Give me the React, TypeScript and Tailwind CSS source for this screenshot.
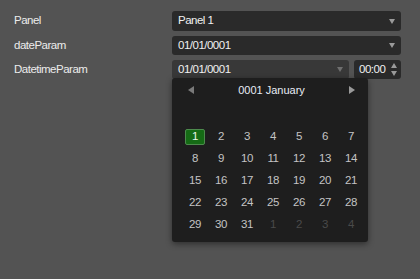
import React from 'react';

const days: { n: number; muted?: boolean }[] = [
  ...Array.from({ length: 31 }, (_, i) => ({ n: i + 1 })),
  { n: 1, muted: true },
  { n: 2, muted: true },
  { n: 3, muted: true },
  { n: 4, muted: true },
];

const Caret = ({ color = 'border-t-[#9a9a9a]' }: { color?: string }) => (
  <span className={`block w-0 h-0 border-x-[3px] border-x-transparent border-t-[5px] ${color}`} />
);

const Field = ({ value, extra = '' }: { value: string; extra?: string }) => (
  <div className={`flex h-full items-center justify-between rounded-[3px] pl-[6px] pr-[6px] text-[#f0f0f0] ${extra}`}>
    <span>{value}</span>
    <Caret />
  </div>
);

export default function App() {
  return (
    <div className="min-h-[279px] w-[420px] bg-[#535353] pt-[11px] font-['Liberation_Sans',Arial,sans-serif] text-[11.5px] leading-none tracking-[-0.5px]">
      <div className="flex flex-col gap-[5px]">
        <div className="flex h-[20px] items-center">
          <div className="w-[172px] pl-[14px] text-[#ececec]">Panel</div>
          <div className="h-full w-[229px]">
            <Field value="Panel 1" extra="bg-[#2a2a2a]" />
          </div>
        </div>
        <div className="flex h-[19px] items-center">
          <div className="w-[172px] pl-[14px] text-[#ececec]">dateParam</div>
          <div className="h-full w-[229px]">
            <Field value="01/01/0001" extra="bg-[#2a2a2a]" />
          </div>
        </div>
        <div className="flex h-[19px] items-center">
          <div className="w-[172px] pl-[14px] text-[#ececec]">DatetimeParam</div>
          <div className="relative flex h-full w-[229px] gap-[5px]">
            <div className="flex h-full w-[177px] items-center justify-between rounded-[3px] bg-[#383838] pl-[6px] pr-[6px] text-[#f0f0f0]">
              <span>01/01/0001</span>
              <Caret color="border-t-[#6f6f6f]" />
            </div>
            <div className="flex h-full flex-1 items-center justify-between rounded-[3px] bg-[#2a2a2a] pl-[5px] pr-[4px] text-[#f0f0f0]">
              <span>00:00</span>
              <div className="flex flex-col gap-[3px]">
                <span className="block w-0 h-0 border-x-[3px] border-x-transparent border-b-[5px] border-b-[#9a9a9a]" />
                <Caret />
              </div>
            </div>

            <div className="absolute left-0 top-[18px] z-10 w-[196px] rounded-[3px] bg-[#1e1e1e] pb-[6px] shadow-[0_2px_6px_rgba(0,0,0,0.45)]">
              <div className="flex h-[24px] items-center justify-between pl-[16px] pr-[13px]">
                <span className="block w-0 h-0 border-y-[4.5px] border-y-transparent border-r-[6px] border-r-[#7a7a7a]" />
                <span className="text-[11px] tracking-normal text-[#e6ecf5]">0001 January</span>
                <span className="block w-0 h-0 border-y-[4.5px] border-y-transparent border-l-[6px] border-l-[#9a9a9a]" />
              </div>
              <div className="h-[24px]" />
              <div className="box-content grid w-[182px] grid-cols-7 pl-[10px]">
                {days.map((d, i) => (
                  <div key={i} className="flex h-[22px] items-center justify-center">
                    {i === 0 ? (
                      <span className="flex h-[16px] w-[20px] items-center justify-center rounded-[2px] border border-[#4d8a4d] bg-[#156b15] text-[#e8f5e8]">
                        {d.n}
                      </span>
                    ) : (
                      <span className={d.muted ? 'text-[#4a4a4a]' : 'text-[#c4c4c4]'}>{d.n}</span>
                    )}
                  </div>
                ))}
              </div>
            </div>
          </div>
        </div>
      </div>
    </div>
  );
}
